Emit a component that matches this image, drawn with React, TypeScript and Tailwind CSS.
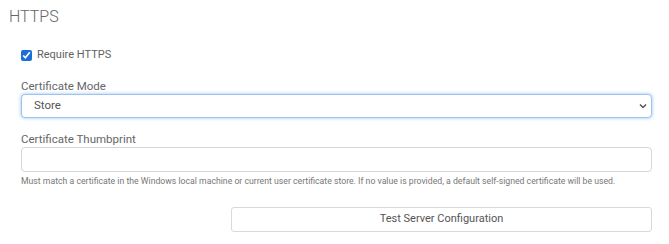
import { useState } from "react";

function Chevron() {
  return (
    <svg width="8" height="5" viewBox="0 0 8 5" className="pointer-events-none absolute right-[5px] top-1/2 -translate-y-1/2">
      <path d="M1 1 L4 4 L7 1" fill="none" stroke="#555" strokeWidth="1.5" />
    </svg>
  );
}

export default function App() {
  const [https, setHttps] = useState(true);
  const [mode, setMode] = useState("Store");

  return (
    <div className="w-[669px] h-[244px] bg-white font-['Roboto',sans-serif] text-[#5f5f5f] pl-[9px] pr-[17px] pt-[6px]">
      {/* HEADING */}
      <h2 className="text-[16px] font-light leading-[22px] text-[#666]">HTTPS</h2>

      <div className="pl-[12px]">
        <label className="flex items-center gap-[5px] mt-[20px] h-[14px] text-[11px]">
          <input
            type="checkbox"
            checked={https}
            onChange={(e) => setHttps(e.target.checked)}
            className="w-[11px] h-[11px] m-0 accent-[#1a6fd6]"
          />
          <span>Require HTTPS</span>
        </label>

        {/* CERTIFICATE MODE */}
        <div className="mt-[18px]">
          <div className="text-[11.5px] leading-[13px] text-[#666]">Certificate Mode</div>
          <div className="relative mt-[1px]">
            <select
              value={mode}
              onChange={(e) => setMode(e.target.value)}
              className="appearance-none block w-full h-[24px] rounded-[4px] border border-[#9ec3ee] bg-white pl-[12px] text-[11.5px] text-[#555] shadow-[0_0_3px_1px_rgba(120,170,230,0.45)] outline-none"
            >
              <option>Store</option>
              <option>File</option>
            </select>
            <Chevron />
          </div>
        </div>

        {/* THUMBPRINT */}
        <div className="mt-[15px]">
          <div className="text-[11.5px] leading-[13px] text-[#666]">Certificate Thumbprint</div>
          <input
            type="text"
            className="block w-full h-[25px] mt-[1px] rounded-[4px] border border-[#d6d6d6] bg-white px-[8px] text-[11.5px] outline-none"
          />
          <p className="mt-[4px] text-[8.7px] leading-[11px] text-[#777]">
            Must match a certificate in the Windows local machine or current user certificate store. If no value is provided, a default self-signed certificate will be used.
          </p>
        </div>

        <div className="flex justify-end mt-[20px]">
          <button className="w-[421px] h-[25px] rounded-[3px] border border-[#d9d9d9] bg-white text-[11px] text-[#555]">
            Test Server Configuration
          </button>
        </div>
      </div>
    </div>
  );
}
